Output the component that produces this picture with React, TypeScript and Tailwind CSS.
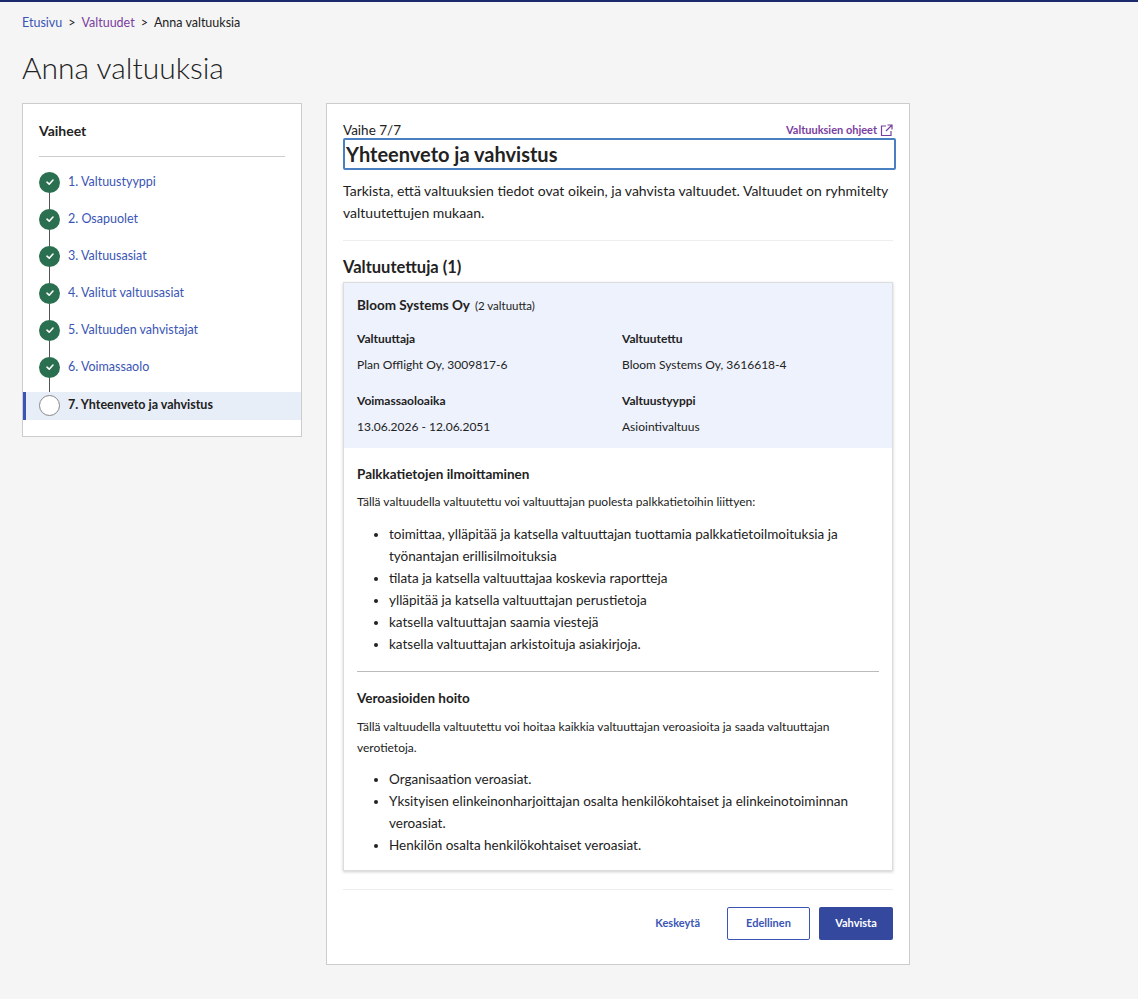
import React from "react";

const steps = ["1. Valtuustyyppi","2. Osapuolet","3. Valtuusasiat","4. Valitut valtuusasiat","5. Valtuuden vahvistajat","6. Voimassaolo"];

function Check() {
  return (
    <span className="w-[21px] h-[21px] rounded-full bg-[#2a6f4f] flex items-center justify-center shrink-0">
      <svg width="10" height="10" viewBox="0 0 10 10"><path d="M2 5.2 L4.2 7.2 L8 3" stroke="white" strokeWidth="1.6" fill="none" strokeLinecap="round" strokeLinejoin="round"/></svg>
    </span>
  );
}

export default function App() {
  return (
    <div className="min-h-[999px] bg-[#f5f5f5] border-t-2 border-[#1a2a6c] text-[#222]" style={{ fontFamily: "Lato, 'Noto Sans', sans-serif" }}>
      <div className="px-[22px] pt-[12px]">
        <div className="text-[12.5px] flex gap-[6px]">
          <span className="text-[#3a55b5]">Etusivu</span><span>&gt;</span>
          <span className="text-[#7a3ea0]">Valtuudet</span><span>&gt;</span>
          <span>Anna valtuuksia</span>
        </div>
        <h1 className="text-[30px] font-light mt-[16px] leading-[36px]">Anna valtuuksia</h1>
        <div className="flex gap-[24px] items-start mt-[18px]">
          <div className="w-[280px] bg-white border border-[#ccc] pb-[8px]">
            <div className="px-[16px] pt-[16px]">
              <div className="text-[14px] font-bold">Vaiheet</div>
              <div className="border-b border-[#ccc] mt-[15px] mb-[15px]" />
            </div>
            {steps.map((s) => (
              <div key={s}>
                <div className="flex items-center gap-[8px] px-[16px] h-[21px]">
                  <Check />
                  <span className="text-[12.5px] text-[#3a55b5]">{s}</span>
                </div>
                <div className="ml-[26px] w-px h-[16px] bg-[#555] my-0" />
              </div>
            ))}
            <div className="flex items-center gap-[8px] px-[16px] h-[28px] bg-[#e8eef8] border-l-[3px] border-[#3a55b5] pl-[13px] -mt-[2px]">
              <span className="w-[21px] h-[21px] rounded-full border border-[#888] bg-white shrink-0" />
              <span className="text-[12.5px] font-bold">7. Yhteenveto ja vahvistus</span>
            </div>
            <div className="h-[8px]" />
          </div>
          <div className="w-[584px] bg-white border border-[#ccc] px-[16px] pt-[18px] pb-[24px]">
            <div className="flex justify-between items-end">
              <span className="text-[13.5px] leading-[16px]">Vaihe 7/7</span>
              <span className="text-[11px] font-bold text-[#7a3ea0] flex items-center gap-[3px]">Valtuuksien ohjeet
                <svg width="13" height="13" viewBox="0 0 13 13" fill="none" stroke="#7a3ea0" strokeWidth="1.2"><path d="M6 2H1.5v9.5H11V7"/><path d="M7.5 1H12v4.5M12 1 6 7"/></svg>
              </span>
            </div>
            <div className="border-2 border-[#4a7fc1] rounded-[2px] px-[1px] h-[32px] flex items-center -mr-[3px]">
              <h2 className="text-[20px] font-bold">Yhteenveto ja vahvistus</h2>
            </div>
            <p className="text-[14px] leading-[22px] mt-[10px]">Tarkista, että valtuuksien tiedot ovat oikein, ja vahvista valtuudet. Valtuudet on ryhmitelty valtuutettujen mukaan.</p>
            <div className="border-b border-[#eee] mt-[16px]" />
            <h3 className="text-[16.5px] font-bold mt-[14px]">Valtuutettuja (1)</h3>
            <div className="mt-[2px] border border-[#ddd] shadow-[0_1px_3px_rgba(0,0,0,0.2)]">
              <div className="bg-[#eef2fc] px-[13px] pt-[12px] pb-[12px]">
                <div className="flex items-baseline gap-[5px]"><span className="text-[13.5px] font-bold">Bloom Systems Oy</span><span className="text-[11.5px]">(2 valtuutta)</span></div>
                <div className="grid grid-cols-2 gap-x-[8px] mt-[15px] text-[12px]">
                  <div className="font-bold">Valtuuttaja</div><div className="font-bold">Valtuutettu</div>
                  <div className="mt-[8px]">Plan Offlight Oy, 3009817-6</div><div className="mt-[8px]">Bloom Systems Oy, 3616618-4</div>
                  <div className="font-bold mt-[18px]">Voimassaoloaika</div><div className="font-bold mt-[18px]">Valtuustyyppi</div>
                  <div className="mt-[8px]">13.06.2026 - 12.06.2051</div><div className="mt-[8px]">Asiointivaltuus</div>
                </div>
              </div>
              <div className="px-[13px] pt-[16px] pb-[14px]">
                <div className="text-[13.5px] font-bold">Palkkatietojen ilmoittaminen</div>
                <p className="text-[12px] mt-[8px]">Tällä valtuudella valtuutettu voi valtuuttajan puolesta palkkatietoihin liittyen:</p>
                <ul className="list-disc pl-[32px] mt-[12px] text-[13.5px] leading-[22px]">
                  <li>toimittaa, ylläpitää ja katsella valtuuttajan tuottamia palkkatietoilmoituksia ja työnantajan erillisilmoituksia</li>
                  <li>tilata ja katsella valtuuttajaa koskevia raportteja</li>
                  <li>ylläpitää ja katsella valtuuttajan perustietoja</li>
                  <li>katsella valtuuttajan saamia viestejä</li>
                  <li>katsella valtuuttajan arkistoituja asiakirjoja.</li>
                </ul>
                <div className="border-b border-[#bbb] mt-[16px] mb-[16px]" />
                <div className="text-[13.5px] font-bold">Veroasioiden hoito</div>
                <p className="text-[12px] mt-[8px] leading-[21px] pr-[20px]">Tällä valtuudella valtuutettu voi hoitaa kaikkia valtuuttajan veroasioita ja saada valtuuttajan verotietoja.</p>
                <ul className="list-disc pl-[32px] mt-[10px] text-[13.5px] leading-[22px]">
                  <li>Organisaation veroasiat.</li>
                  <li>Yksityisen elinkeinonharjoittajan osalta henkilökohtaiset ja elinkeinotoiminnan veroasiat.</li>
                  <li>Henkilön osalta henkilökohtaiset veroasiat.</li>
                </ul>
              </div>
            </div>
            <div className="border-b border-[#eee] mt-[18px]" />
            <div className="flex justify-end items-center mt-[17px]">
              <span className="text-[11px] font-bold text-[#3a55b5] mr-[27px]">Keskeytä</span>
              <span className="w-[83px] h-[33px] border border-[#3a55b5] rounded-[2px] flex items-center justify-center text-[11px] font-bold text-[#3a55b5] mr-[9px]">Edellinen</span>
              <span className="w-[74px] h-[33px] bg-[#34489e] rounded-[2px] flex items-center justify-center text-[11px] font-bold text-white">Vahvista</span>
            </div>
          </div>
        </div>
      </div>
    </div>
  );
}
